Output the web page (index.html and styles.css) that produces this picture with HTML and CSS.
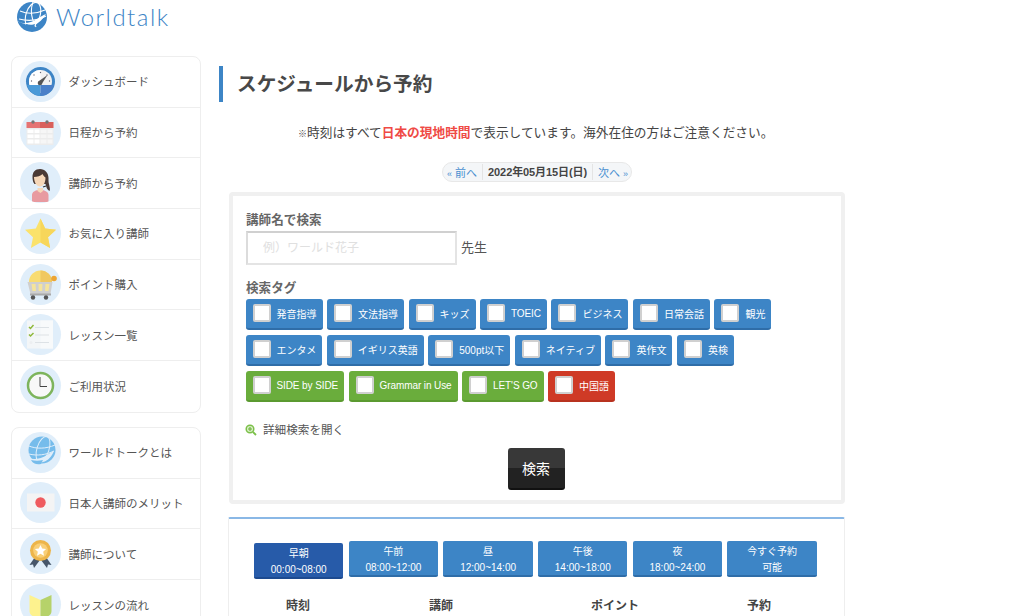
FILE: index.html
```html
<!DOCTYPE html>
<html lang="ja">
<head>
<meta charset="utf-8">
<title>スケジュールから予約</title>
<link rel="stylesheet" href="styles.css">
</head>
<body>
<header class="site-header">
  <svg class="logo-mark" viewBox="0 0 30 30">
    <circle cx="15" cy="15" r="15" fill="#3d85c6"/>
    <g fill="none" stroke="#fff" stroke-width="1.1">
      <ellipse cx="16" cy="13" rx="7" ry="13" transform="rotate(18 16 13)"/>
      <path d="M3 9c7 3 16 3 25-1M2 17c8 2 18 2 27-3"/>
      <path d="M16 0c-3 8-2 16 3 25"/>
    </g>
    <path d="M0 19c5 3 13 3 20-2 3-2 6-4 9-5-3 5-7 9-12 11-4 1-6 0-8-1 0 0-6-1-9-3z" fill="#fff"/>
    <path d="M9 22c3 1 7 1 9 0l-2 7-7-2z" fill="#3d85c6"/>
  </svg>
  <span class="logo-text">Worldtalk</span>
</header>
<div class="page">
  <aside class="sidebar">
    <nav class="panel">
      <a class="nav-row"><svg class="nav-icon" viewBox="0 0 41 41"><circle cx="20.500" cy="20.500" r="14.500" fill="#3d85c6"/><circle cx="20.500" cy="20.500" r="11.500" fill="#f1f1f1"/><path d="M20.500 9a11.500 11.500 0 0 0-11.500 11.500c0 1.500.3 2.500.6 3.500h10.900z" fill="#fff"/><path d="M7 24h13.500v11A14.500 14.500 0 0 1 7 24z" fill="#4a9ad8"/><path d="M34 24H20.500v11A14.500 14.500 0 0 0 34 24z" fill="#4a7fc8"/><g fill="#667"><circle cx="11.500" cy="20" r=".7"/><circle cx="14" cy="14" r=".7"/><circle cx="20.500" cy="11.500" r=".7"/><circle cx="27" cy="14" r=".7"/><circle cx="29.500" cy="20" r=".7"/></g><path d="M19 20l8.500-6-5.500 8.500z" fill="#555"/><circle cx="20" cy="22" r="2.300" fill="#555"/></svg><span>ダッシュボード</span></a>
      <a class="nav-row"><svg class="nav-icon" viewBox="0 0 41 41"><rect x="6.500" y="10" width="27" height="23" fill="#ececec"/><path d="M6.500 10h13.500v6H6.500z" fill="#e57373"/><path d="M20 10h13.500v6H20z" fill="#d9605c"/><g fill="#fff"><rect x="7.500" y="17.500" width="6" height="3.500"/><rect x="14.500" y="17.500" width="5" height="3.500"/><rect x="7.500" y="22.500" width="6" height="3.500"/><rect x="14.500" y="22.500" width="5" height="3.500"/><rect x="7.500" y="27.500" width="6" height="4"/><rect x="14.500" y="27.500" width="5" height="4"/></g><g fill="#f6f6f6"><rect x="20.500" y="17.500" width="6" height="3.500"/><rect x="27.500" y="17.500" width="5" height="3.500"/><rect x="20.500" y="22.500" width="6" height="3.500"/><rect x="27.500" y="22.500" width="5" height="3.500"/><rect x="20.500" y="27.500" width="6" height="4"/><rect x="27.500" y="27.500" width="5" height="4"/></g><circle cx="13" cy="10" r="1.700" fill="#777"/><circle cx="27" cy="10" r="1.700" fill="#777"/></svg><span>日程から予約</span></a>
      <a class="nav-row"><svg class="nav-icon" viewBox="0 0 41 41"><path d="M12 40v-7c0-3 3-5 8-5 5 0 8.500 2 8.500 5v7z" fill="#e89aa0"/><path d="M20 7c-5 0-7.500 3-7.500 8s2 7 2 7h11c1 3 1 5 4 7 1-2 0-4-.5-7-.5-2-.5-3-.5-6 0-5-3.500-9-8.500-9z" fill="#4a3a35"/><path d="M14 15c3 0 7-1 8.500-3 1 2 2 3 3 3.500 0 5-2 9-5.500 9S14 20 14 15z" fill="#f6d7b8"/><path d="M17.500 26h5.500v3l-2.500 2-3-2z" fill="#f6d7b8"/><path d="M23 25l3-1" stroke="#333" stroke-width="1.300"/></svg><span>講師から予約</span></a>
      <a class="nav-row"><svg class="nav-icon" viewBox="0 0 41 41"><path d="M20.500 5.500l4.700 10 10.800 1.300-8 7.400 2.100 10.800-9.600-5.400-9.600 5.400 2.100-10.800-8-7.400 10.800-1.300z" fill="#fbe26b"/><path d="M20.500 5.500l4.700 10 10.800 1.300-8 7.400 2.100 10.800-9.600-5.400z" fill="#f7d65a"/></svg><span>お気に入り講師</span></a>
      <a class="nav-row"><svg class="nav-icon" viewBox="0 0 41 41"><path d="M9 18a11.500 11.500 0 0 1 23 0z" fill="#f8dc72"/><path d="M20.500 6.500A11.500 11.500 0 0 1 32 18H20.500z" fill="#f0c860"/><path d="M7.500 18h25l-2 12h-20z" fill="#cfcfcf"/><path d="M11.500 20l1 7h3.500l-.5-7zM18.500 20l.2 7h3.500l.2-7zM25.500 20l-.5 7h3.500l1-7z" fill="#f5e49b"/><rect x="10" y="29.500" width="21" height="2" fill="#aaa"/><circle cx="13" cy="33.500" r="2.200" fill="#555"/><circle cx="26" cy="33.500" r="2.200" fill="#555"/><circle cx="34" cy="14.500" r="2.800" fill="#eda533"/></svg><span>ポイント購入</span></a>
      <a class="nav-row"><svg class="nav-icon" viewBox="0 0 41 41"><rect x="7" y="6.500" width="26" height="28" fill="#f3f6f8"/><path d="M20.500 6.500H33v28H20.500z" fill="#f8fafb"/><path d="M9 13l1.500 1.500L13.500 11M9 20.500l1.500 1.500 3-3" fill="none" stroke="#8fb83a" stroke-width="1.500"/><path d="M15 13.500h14M15 21h14M15 28.500h14" stroke="#dde2e6" stroke-width="1.200"/><circle cx="11" cy="28.500" r="1.500" fill="#eceff1"/></svg><span>レッスン一覧</span></a>
      <a class="nav-row"><svg class="nav-icon" viewBox="0 0 41 41"><circle cx="20.500" cy="20.500" r="12.500" fill="#f8f8f8" stroke="#7db45c" stroke-width="2.500"/><path d="M20 12v9.500h7" fill="none" stroke="#444" stroke-width="1"/></svg><span>ご利用状況</span></a>
    </nav>
    <nav class="panel">
      <a class="nav-row"><svg class="nav-icon" viewBox="0 0 41 41"><circle cx="22" cy="18" r="13.500" fill="#76bceb"/><g fill="none" stroke="#e0eefa" stroke-width="1"><ellipse cx="23" cy="17" rx="6" ry="13" transform="rotate(18 23 17)"/><path d="M9 14c7 3 17 3 26-1M9 22c8 2 17 1 25-3"/></g><path d="M8 26c6 2 13 1 19-3 3-2 5-3 7-4-2 5-6 10-11 11-5 2-11 1-15-4z" fill="#e0eefa"/><path d="M11 28c4 1 8 1 12 0l-2 4c-4 1-8 0-10-4z" fill="#76bceb"/></svg><span>ワールドトークとは</span></a>
      <a class="nav-row"><svg class="nav-icon" viewBox="0 0 41 41"><rect x="7" y="11.500" width="27.500" height="18" fill="#f4f4f4"/><circle cx="20.500" cy="20.500" r="5.200" fill="#ef5b5e"/></svg><span>日本人講師のメリット</span></a>
      <a class="nav-row"><svg class="nav-icon" viewBox="0 0 41 41"><path d="M15 24l-5.500 8 3.500-.5 1 3.500 6-8zM26 24l5.500 8-3.500-.5-1 3.500-6-8z" fill="#46566a"/><circle cx="20.500" cy="17.500" r="10.500" fill="#edb54a"/><circle cx="20.500" cy="17.500" r="7.300" fill="#f9cf77"/><path d="M20.500 12l1.700 3.600 3.900.5-2.900 2.700.8 3.900-3.500-2-3.500 2 .8-3.900-2.900-2.700 3.900-.5z" fill="#fff"/></svg><span>講師について</span></a>
      <a class="nav-row"><svg class="nav-icon" viewBox="0 0 41 41"><path d="M9.500 11l11 5v19l-8-3c-2-1-3-3-3-5z" fill="#fdf28e"/><path d="M31.500 11l-11 5v19l8-3c2-1 3-3 3-5z" fill="#b6d26a"/></svg><span>レッスンの流れ</span></a>
    </nav>
  </aside>
  <main class="main">
    <h1 class="page-title">スケジュールから予約</h1>
    <p class="note"><small class="note-mark">※</small>時刻はすべて<strong class="note-strong">日本の現地時間</strong>で表示しています。海外在住の方はご注意ください。</p>
    <div class="pager-wrap">
      <div class="pager">
        <a class="pager-link"><span class="pager-arrow">«</span> 前へ</a>
        <b class="pager-date">2022年05月15日(日)</b>
        <a class="pager-link">次へ <span class="pager-arrow">»</span></a>
      </div>
    </div>
    <section class="search-box">
      <h2 class="field-title">講師名で検索</h2>
      <div class="name-row">
        <input class="name-input" type="text" placeholder="例）ワールド花子">
        <span class="name-suffix">先生</span>
      </div>
      <h2 class="field-title tag-title">検索タグ</h2>
      <div class="tags">
        <label class="tag"><i class="check"></i>発音指導</label>
        <label class="tag"><i class="check"></i>文法指導</label>
        <label class="tag"><i class="check"></i>キッズ</label>
        <label class="tag tag-latin"><i class="check"></i>TOEIC</label>
        <label class="tag"><i class="check"></i>ビジネス</label>
        <label class="tag"><i class="check"></i>日常会話</label>
        <label class="tag"><i class="check"></i>観光</label>
      </div>
      <div class="tags">
        <label class="tag"><i class="check"></i>エンタメ</label>
        <label class="tag"><i class="check"></i>イギリス英語</label>
        <label class="tag"><i class="check"></i>500pt以下</label>
        <label class="tag"><i class="check"></i>ネイティブ</label>
        <label class="tag"><i class="check"></i>英作文</label>
        <label class="tag"><i class="check"></i>英検</label>
      </div>
      <div class="tags">
        <label class="tag tag-green tag-latin"><i class="check"></i>SIDE by SIDE</label>
        <label class="tag tag-green tag-latin"><i class="check"></i>Grammar in Use</label>
        <label class="tag tag-green tag-latin"><i class="check"></i>LET'S GO</label>
        <label class="tag tag-red"><i class="check"></i>中国語</label>
      </div>
      <a class="more-link">
        <svg class="more-icon" viewBox="0 0 12 12"><circle cx="5" cy="5" r="3.800" fill="#d8efc4" stroke="#7cc04a" stroke-width="1.500"/><path d="M3 5h4M5 3v4" stroke="#6bb03a" stroke-width="1.100"/><path d="M8 8l3 3" stroke="#7cc04a" stroke-width="1.800"/></svg>詳細検索を開く
      </a>
      <div class="submit-row"><button class="submit" type="button">検索</button></div>
    </section>
    <section class="results">
      <div class="filters">
        <a class="filter is-active">早朝<br>00:00~08:00</a>
        <a class="filter">午前<br>08:00~12:00</a>
        <a class="filter">昼<br>12:00~14:00</a>
        <a class="filter">午後<br>14:00~18:00</a>
        <a class="filter">夜<br>18:00~24:00</a>
        <a class="filter">今すぐ予約<br>可能</a>
      </div>
      <div class="table-head">
        <span>時刻</span><span>講師</span><span>ポイント</span><span>予約</span>
      </div>
    </section>
  </main>
</div>
</body>
</html>
```
FILE: styles.css
```css
* { box-sizing: border-box; }
html, body { height: 616px; overflow: hidden; }
body {
  margin: 0;
  background: #fff;
  color: #444;
  font-family: "Liberation Sans", "Noto Sans CJK JP", sans-serif;
}
.site-header {
  height: 56px;
  padding: 2px 0 0 17px;
  display: flex;
  align-items: flex-start;
}
.logo-mark { width: 30px; height: 30px; flex: none; }
.logo-text {
  margin-left: 9px;
  color: #3d85c6;
  font: 300 24px/30px Lato, sans-serif;
  letter-spacing: 1.5px;
}
.page { display: flex; align-items: flex-start; padding-left: 11px; }
.sidebar { width: 190px; flex: none; }
.panel {
  border: 1px solid #eee;
  border-radius: 8px;
  margin-bottom: 14px;
}
.nav-row {
  height: 50.7px;
  display: flex;
  align-items: center;
  padding-left: 7.5px;
  padding-bottom: 1px;
  border-bottom: 1px solid #eee;
  color: #555;
  font-size: 11.5px;
}
.nav-row:last-child { border-bottom: 0; }
.nav-icon {
  width: 41px;
  height: 41px;
  flex: none;
  margin-right: 8px;
  background: #e0eefa;
  border-radius: 50%;
}
.main { width: 626px; margin: 10px 0 0 18px; }
.page-title {
  height: 36px;
  margin: 0;
  padding-left: 14px;
  border-left: 4px solid #3d85c6;
  color: #484848;
  font-size: 19.7px;
  line-height: 36px;
}
.note {
  margin: 22px 0 0;
  height: 18px;
  padding-left: 79px;
  color: #444;
  font-size: 12.7px;
  line-height: 18px;
  white-space: nowrap;
}
.note-mark { font-size: 9px; }
.note-strong { color: #ef4a45; }
.pager-wrap { display: flex; justify-content: center; margin: 20px 0 0 10px; }
.pager {
  height: 20px;
  width: 190px;
  display: flex;
  align-items: center;
  padding: 0 4px;
  background: #f4f6f8;
  border: 1px solid #e8e8e8;
  border-radius: 10px;
  font-size: 11px;
  white-space: nowrap;
}
.pager-link { color: #4a8fd0; }
.pager-arrow { font-size: 9px; }
.pager-date {
  margin: 0 5px;
  padding: 0 5px;
  border-left: 1px solid #e4e4e4;
  border-right: 1px solid #e4e4e4;
  color: #444;
  line-height: 16px;
  letter-spacing: -0.1px;
}
.search-box {
  height: 312px;
  margin: 10px 0 0 10px;
  padding: 16px 13px 0;
  border: 4px solid #f0f0f0;
  border-radius: 4px;
}
.field-title {
  margin: 0;
  color: #666;
  font-size: 12.6px;
  line-height: 16px;
}
.name-row { display: flex; align-items: center; margin-top: 3px; }
.name-input {
  width: 211px;
  height: 34px;
  padding: 0 0 0 15px;
  border: 2px solid #e4e4e4;
  border-top-color: #d0d0d0;
  border-left-color: #dcdcdc;
  background: #fff;
  font: 12px "Liberation Sans", "Noto Sans CJK JP", sans-serif;
}
.name-input::placeholder { color: #e0e0e0; opacity: 1; }
.name-suffix { margin: 0 0 4px 4px; color: #555; font-size: 13px; }
.tag-title { margin-top: 15px; margin-bottom: 3px; }
.tags { display: flex; gap: 4.5px; margin-bottom: 5px; margin-left: -0.5px; }
.tag {
  height: 31px;
  display: flex;
  align-items: center;
  padding: 0 6px 1px 7px;
  border-bottom: 2px solid #2f6da8;
  border-radius: 3px;
  background: #3d85c6;
  color: #fff;
  font-size: 10px;
  white-space: nowrap;
}
.tag-latin { letter-spacing: -0.1px; }
.tag-green { background: #6aad3c; border-bottom-color: #5b9a30; }
.tag-red { background: #cf3a26; border-bottom-color: #b8321f; }
.check {
  width: 18px;
  height: 18px;
  flex: none;
  margin-right: 6px;
  background: #fff;
  border: 2px solid #d0d0d0;
  border-radius: 2px;
}
.more-link {
  display: flex;
  align-items: center;
  margin-top: 20px;
  color: #555;
  font-size: 11.6px;
  line-height: 16px;
  margin-left: -1px;
}
.more-icon { width: 12px; height: 12px; margin-right: 6px; flex: none; }
.submit-row { display: flex; justify-content: center; margin-top: 10px; padding-right: 2px; }
.submit {
  width: 57px;
  height: 42px;
  padding: 0;
  border: 0;
  border-bottom: 2px solid #111;
  border-radius: 3px;
  background: linear-gradient(#383838 0 50%, #222 50% 100%);
  color: #fff;
  font: 14px "Liberation Sans", "Noto Sans CJK JP", sans-serif;
}
.results {
  height: 120px;
  margin: 13px 0 0 9px;
  padding: 22px 0 0 25px;
  border: 1px solid #eee;
  border-top: 2px solid #8ab8e6;
  border-bottom: 0;
  border-radius: 2px 2px 0 0;
}
.filters { display: flex; gap: 5.3px; align-items: flex-start; }
.filter {
  width: 89.4px;
  height: 36px;
  padding-top: 3px;
  border-bottom: 2px solid #2f6da8;
  border-radius: 2px;
  background: #3d85c6;
  color: #fff;
  font-size: 10px;
  line-height: 16px;
  text-align: center;
}
.filter.is-active {
  margin-top: 2px;
  background: #275ba9;
  border-bottom-color: #1d4a8f;
}
.table-head {
  display: grid;
  grid-template-columns: 88px 198px 150px 138px;
  margin-top: 18px;
  color: #444;
  font-size: 12px;
  font-weight: bold;
  line-height: 18px;
  text-align: center;
}
```
